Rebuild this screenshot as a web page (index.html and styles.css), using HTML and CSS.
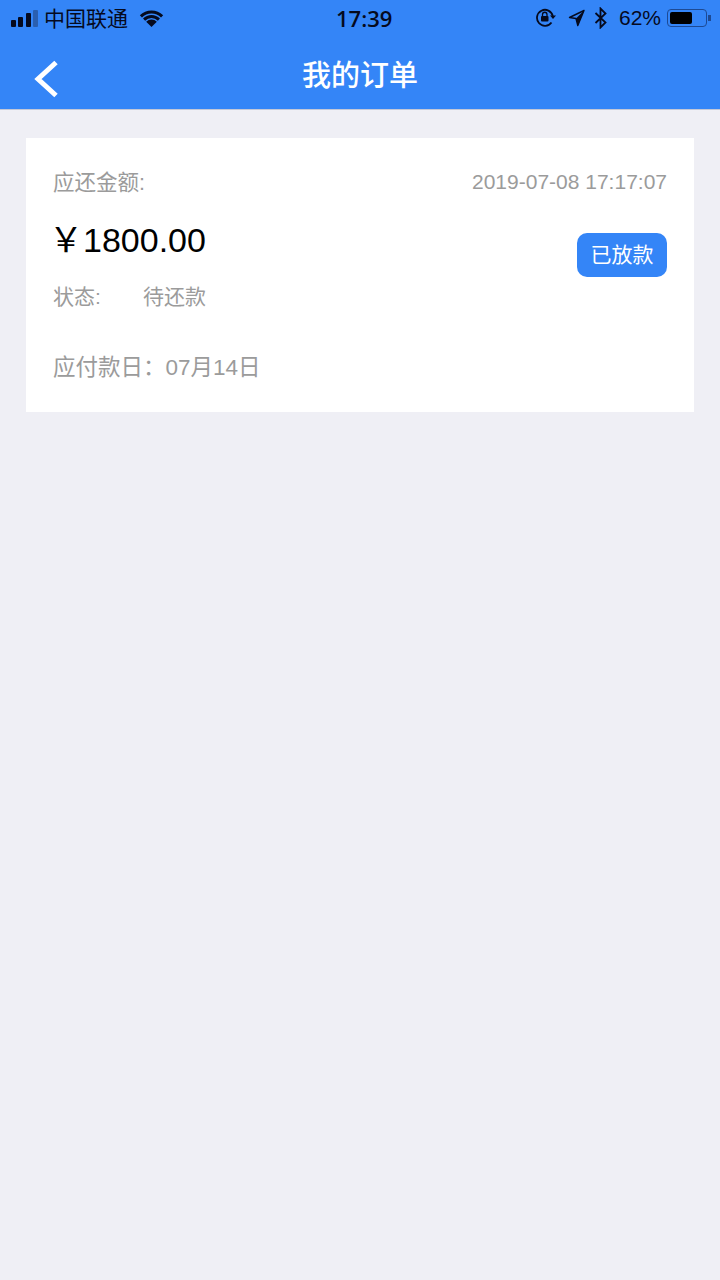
FILE: index.html
```html
<!DOCTYPE html>
<html lang="zh-CN">
<head>
	<meta charset="UTF-8">
	<title>我的订单</title>
	<link rel="stylesheet" href="styles.css">
</head>
<body>
	<div class="header">
		<div class="status">
			<div class="statusLeft">
				<div class="signal"><i class="s1"></i><i class="s2"></i><i class="s3"></i><i class="s4"></i></div>
				<span class="carrier">中国联通</span>
				<svg class="wifi" width="25" height="17" viewBox="0 0 25 17">
					<path d="M12.500 17L7.200 11.700a7.500 7.500 0 0 1 10.600 0z" fill="#050a1e"/>
					<path d="M5.080 9.580a10.500 10.500 0 0 1 14.840 0" fill="none" stroke="#050a1e" stroke-width="3"/>
					<path d="M1.900 6.400a15 15 0 0 1 21.200 0" fill="none" stroke="#050a1e" stroke-width="3"/>
				</svg>
			</div>
			<div class="time">17:39</div>
			<div class="statusRight">
				<svg class="lock" width="22" height="20" viewBox="0 0 22 20">
					<path d="M16.500 14.500a8 8 0 1 1 1.300-6.500" fill="none" stroke="#050a1e" stroke-width="1.800"/>
					<path d="M15 7.500h6l-3 3.500z" fill="#050a1e"/>
					<rect x="6" y="8" width="7.500" height="5.500" rx="1" fill="#050a1e"/>
					<path d="M7.500 8V6.500a2.200 2.200 0 0 1 4.500 0V8" fill="none" stroke="#050a1e" stroke-width="1.300"/>
				</svg>
				<svg class="arrow" width="17" height="18" viewBox="0 0 17 18">
					<path d="M16 1.500L1.500 8.500l6.500 1 1.800 7z" fill="none" stroke="#050a1e" stroke-width="1.400" stroke-linejoin="round"/>
					<path d="M16 1.500L8 9.500l1.800 7z" fill="#050a1e"/>
				</svg>
				<svg class="blue" width="14" height="22" viewBox="0 0 14 22">
					<path d="M1.500 6l10 9.500-5 5V1.500l5 5-10 9.500" fill="none" stroke="#050a1e" stroke-width="1.800"/>
				</svg>
				<span class="percent">62%</span>
				<div class="battery"><div class="level"></div></div>
				<div class="nub"></div>
			</div>
		</div>
		<div class="nav">
			<svg class="back" width="26" height="38" viewBox="0 0 26 38">
				<path d="M23 2.500L5 19l18 16.500" fill="none" stroke="#fff" stroke-width="5"/>
			</svg>
			<h1>我的订单</h1>
		</div>
	</div>
	<div class="card">
		<div class="cardTop">
			<span class="label">应还金额:</span>
			<span class="date">2019-07-08 17:17:07</span>
		</div>
		<div class="cardMid">
			<div>
				<div class="amount"><span class="yuan">￥</span>1800.00</div>
				<div class="state"><span class="stateName">状态:</span><span>待还款</span></div>
			</div>
			<div class="tag">已放款</div>
		</div>
		<div class="due">应付款日：07月14日</div>
	</div>
</body>
</html>
```

FILE: styles.css
```css
body{
	margin: 0;
	background: #efeff5;
	font-family: "Liberation Sans", "Noto Sans CJK SC", sans-serif;
}
.header{
	height: 109px;
	background: #3485f7;
	border-bottom: 1px solid #c4c8d8;
}
.status{
	height: 36px;
	display: flex;
	align-items: center;
	padding: 0 9px 0 11px;
	color: #050a1e;
}
.statusLeft,.statusRight{
	display: flex;
	align-items: center;
}
.statusLeft{width: 325px;}
.statusRight{margin-left: auto;}
.signal{
	display: flex;
	align-items: flex-end;
	gap: 2.330px;
	height: 18px;
}
.signal i{
	width: 5px;
	background: #050a1e;
	border-radius: 1px;
}
.s1{height: 7px;}
.s2{height: 10px;}
.s3{height: 14px;}
.signal .s4{height: 17px;background: #2a5fb0;}
.carrier{
	font-size: 21px;
	margin: 0 0 3px 6px;
}
.wifi{margin-left: 11px;}
.time{
	width: 56px;
	text-align: center;
	font-size: 22px;
	font-family: "Open Sans", sans-serif;
	font-weight: 600;
}
.arrow{margin-left: 11px;}
.blue{margin-left: 9px;}
.percent{
	font-size: 21px;
	margin-left: 11px;
}
.battery{
	width: 34px;
	height: 12px;
	border: 1px solid #1d4a94;
	border-radius: 4px;
	padding: 2px;
	margin-left: 6px;
}
.level{
	width: 22px;
	height: 12px;
	background: #000;
	border-radius: 2px;
}
.nub{
	width: 3px;
	height: 6px;
	background: #1d4a94;
	margin-left: 1px;
}
.nav{
	height: 73px;
	display: flex;
	align-items: center;
	justify-content: center;
	position: relative;
}
.back{
	position: absolute;
	left: 33px;
	top: 24px;
}
h1{
	margin: 0;
	font-size: 29px;
	font-weight: 500;
	color: #fff;
}
.card{
	margin: 28px 26px 0;
	height: 274px;
	padding: 0 27px 0 27px;
	background: #fff;
	color: #9b9b9b;
}
.cardTop{
	display: flex;
	justify-content: space-between;
	align-items: center;
	padding-top: 29px;
	height: 30px;
	font-size: 21px;
}
.label{
	font-size: 21.500px;
	margin-bottom: 4px;
}
.cardMid{
	display: flex;
	justify-content: space-between;
	align-items: center;
	margin-top: 21px;
}
.amount{
	font-size: 34px;
	line-height: 44px;
	color: #000;
}
.yuan{margin-left: -4px;}
.state{
	margin-top: 21px;
	font-size: 21px;
	line-height: 28px;
}
.stateName{
	display: inline-block;
	width: 90px;
}
.tag{
	width: 90px;
	height: 44px;
	line-height: 44px;
	margin-bottom: 19px;
	border-radius: 10px;
	background: #3485f7;
	color: #fff;
	font-size: 21px;
	text-align: center;
}
.due{
	margin-top: 42px;
	font-size: 22.500px;
	line-height: 30px;
}
```
